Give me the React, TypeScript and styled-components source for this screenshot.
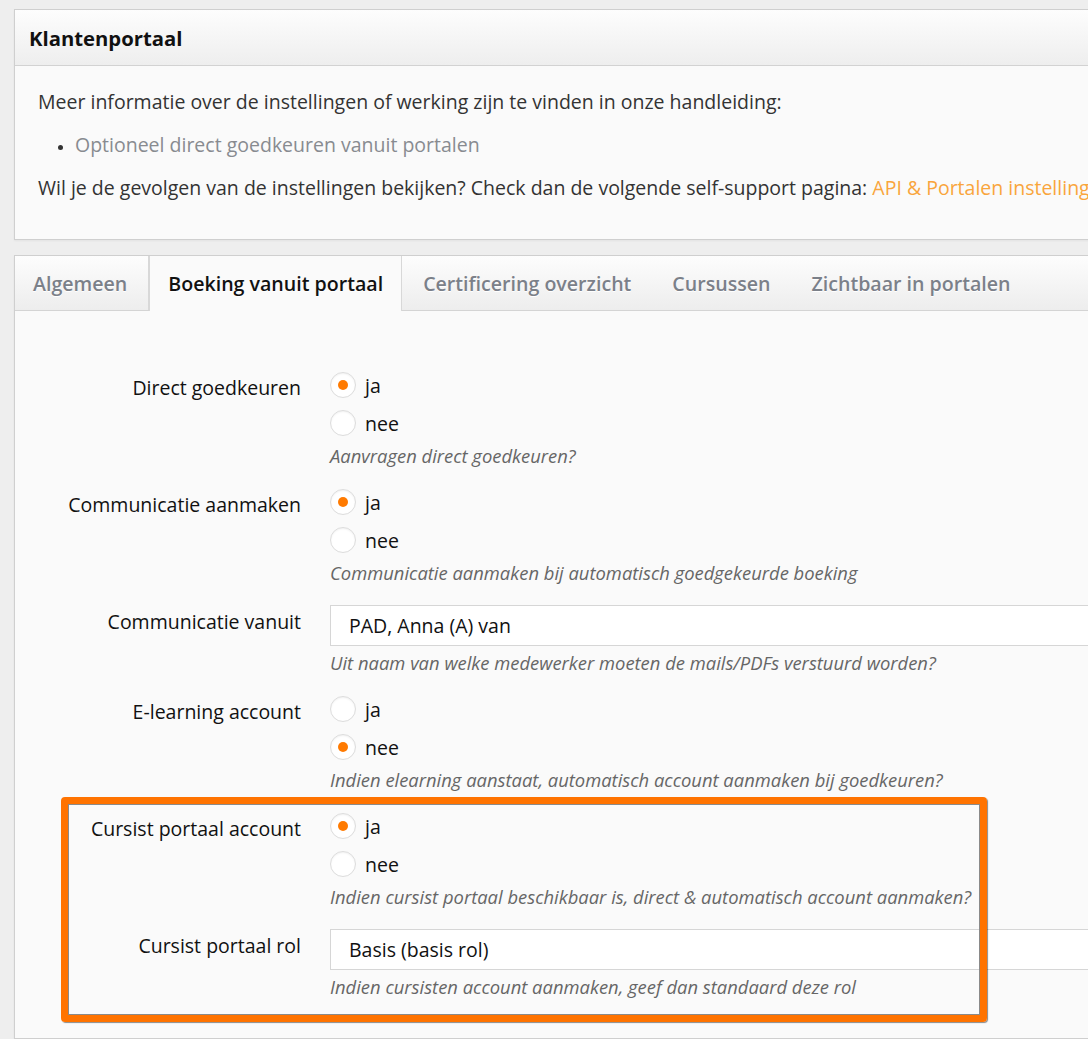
import React from "react";
import styled, { createGlobalStyle } from "styled-components";

const GlobalStyle = createGlobalStyle`
  html, body {
    margin: 0;
    padding: 0;
    background: #eeeeee;
    overflow: hidden;
  }
  body {
    font-family: "Open Sans", "Liberation Sans", sans-serif;
    color: #333;
  }
`;

const Page = styled.div`
  padding: 9px 0 0 14px;
  width: 1250px;
  display: flex;
  flex-direction: column;
  gap: 15px;
`;

const Panel = styled.section`
  border: 1px solid #cfcfcf;
  background: #fafafa;
  box-shadow: 0 1px 2px rgba(0, 0, 0, 0.05);
`;

const PanelHeader = styled.header`
  height: 55px;
  display: flex;
  align-items: center;
  padding: 0 14px;
  background: linear-gradient(#fdfdfd, #eeeeee);
  border-bottom: 1px solid #d2d2d2;
`;

const Title = styled.h1`
  margin: 0;
  font-size: 20.3px;
  font-weight: 700;
  color: #111;
  line-height: 24px;
`;

const PanelBody = styled.div`
  padding: 24px 23px 39px;
  font-size: 19.5px;
  line-height: 24px;
  color: #333;
`;

const Para = styled.p`
  margin: 0;
`;

const LinkList = styled.ul`
  margin: 19px 0;
  padding-left: 37px;
  li::marker {
    color: #333;
    font-size: 15px;
  }
`;

const Link = styled.a<{ $tone: "gray" | "orange" }>`
  color: ${(p) => (p.$tone === "orange" ? "#f9a53c" : "#888b90")};
  text-decoration: none;
  white-space: nowrap;
`;

const TabBar = styled.nav`
  display: flex;
  height: 54px;
  background: linear-gradient(#fdfdfd, #ededed);
  border-bottom: 1px solid #d4d4d4;
`;

const Tab = styled.div<{ $active?: boolean }>`
  display: flex;
  align-items: center;
  padding: ${(p) => (p.$active ? "0 18px" : "0 20px 0 21px")};
  margin-bottom: ${(p) => (p.$active ? "-1px" : "0")};
  font-size: 19.6px;
  font-weight: 600;
  color: ${(p) => (p.$active ? "#111" : "#7b8089")};
  text-shadow: 0 1px 0 #fff;
  border-left: ${(p) => (p.$active ? "1px solid #d8d8d8" : "none")};
  border-right: ${(p) => (p.$active ? "1px solid #d8d8d8" : "none")};
  background: ${(p) => (p.$active ? "#fafafa" : "transparent")};
  &:first-child {
    padding: 0 21px 0 18px;
    border-right: 1px solid #d8d8d8;
  }
`;

const Form = styled.div`
  padding: 55px 0 40px;
  display: flex;
  flex-direction: column;
  gap: 16px;
`;

const Row = styled.div`
  display: grid;
  grid-template-columns: 286px 1fr;
  column-gap: 29px;
`;

const Label = styled.div`
  padding-top: 10px;
  text-align: right;
  font-size: 19.5px;
  line-height: 24px;
  color: #111;
`;

const Control = styled.div`
  display: flex;
  flex-direction: column;
`;

const Option = styled.label`
  height: 38px;
  display: flex;
  align-items: center;
  gap: 9px;
  font-size: 19.5px;
  color: #111;
`;

const Radio = styled.span<{ $checked?: boolean }>`
  width: 24px;
  height: 24px;
  border-radius: 50%;
  border: 1px solid #dcdcdc;
  background: #fff;
  box-shadow: inset 0 1px 2px rgba(0, 0, 0, 0.06);
  display: flex;
  align-items: center;
  justify-content: center;
  &::after {
    content: "";
    width: 10px;
    height: 10px;
    border-radius: 50%;
    background: ${(p) => (p.$checked ? "#ff7a00" : "transparent")};
  }
`;

const Input = styled.div`
  margin-top: 5px;
  height: 39px;
  border: 1px solid #d6d6d6;
  background: #fff;
  display: flex;
  align-items: center;
  padding-left: 18px;
  font-size: 19.5px;
  color: #111;
`;

const Help = styled.div<{ $afterInput?: boolean }>`
  margin-top: ${(p) => (p.$afterInput ? "6px" : "3px")};
  font-size: 18.4px;
  line-height: 22px;
  font-style: italic;
  color: #666;
  white-space: nowrap;
`;

const Highlight = styled.div`
  position: relative;
  display: flex;
  flex-direction: column;
  gap: 16px;
  &::after {
    content: "";
    position: absolute;
    top: -10px;
    bottom: -24px;
    left: 46px;
    width: 912px;
    border: 7px solid #ff7300;
    border-radius: 4px;
    box-shadow: inset 0 0 0 1px #8a8a8a, 1px 1px 1px rgba(0, 0, 0, 0.45);
    pointer-events: none;
  }
`;

type RadioRowProps = { label: string; value: "ja" | "nee"; help: string };

const RadioRow = ({ label, value, help }: RadioRowProps) => (
  <Row>
    <Label>{label}</Label>
    <Control>
      <Option>
        <Radio $checked={value === "ja"} />
        ja
      </Option>
      <Option>
        <Radio $checked={value === "nee"} />
        nee
      </Option>
      <Help>{help}</Help>
    </Control>
  </Row>
);

type SelectRowProps = { label: string; value: string; help: string };

const SelectRow = ({ label, value, help }: SelectRowProps) => (
  <Row>
    <Label>{label}</Label>
    <Control>
      <Input>{value}</Input>
      <Help $afterInput>{help}</Help>
    </Control>
  </Row>
);

export default function App() {
  return (
    <>
      <GlobalStyle />
      <Page>
        <Panel>
          <PanelHeader>
            <Title>Klantenportaal</Title>
          </PanelHeader>
          <PanelBody>
            <Para>
              Meer informatie over de instellingen of werking zijn te vinden in onze handleiding:
            </Para>
            <LinkList>
              <li>
                <Link $tone="gray">Optioneel direct goedkeuren vanuit portalen</Link>
              </li>
            </LinkList>
            <Para>
              Wil je de gevolgen van de instellingen bekijken? Check dan de volgende self-support pagina:{" "}
              <Link $tone="orange">API &amp; Portalen instellingen</Link>
            </Para>
          </PanelBody>
        </Panel>
        <Panel>
          <TabBar>
            <Tab>Algemeen</Tab>
            <Tab $active>Boeking vanuit portaal</Tab>
            <Tab>Certificering overzicht</Tab>
            <Tab>Cursussen</Tab>
            <Tab>Zichtbaar in portalen</Tab>
          </TabBar>
          <Form>
            <RadioRow label="Direct goedkeuren" value="ja" help="Aanvragen direct goedkeuren?" />
            <RadioRow
              label="Communicatie aanmaken"
              value="ja"
              help="Communicatie aanmaken bij automatisch goedgekeurde boeking"
            />
            <SelectRow
              label="Communicatie vanuit"
              value="PAD, Anna (A) van"
              help="Uit naam van welke medewerker moeten de mails/PDFs verstuurd worden?"
            />
            <RadioRow
              label="E-learning account"
              value="nee"
              help="Indien elearning aanstaat, automatisch account aanmaken bij goedkeuren?"
            />
            <Highlight>
              <RadioRow
                label="Cursist portaal account"
                value="ja"
                help="Indien cursist portaal beschikbaar is, direct & automatisch account aanmaken?"
              />
              <SelectRow
                label="Cursist portaal rol"
                value="Basis (basis rol)"
                help="Indien cursisten account aanmaken, geef dan standaard deze rol"
              />
            </Highlight>
          </Form>
        </Panel>
      </Page>
    </>
  );
}
